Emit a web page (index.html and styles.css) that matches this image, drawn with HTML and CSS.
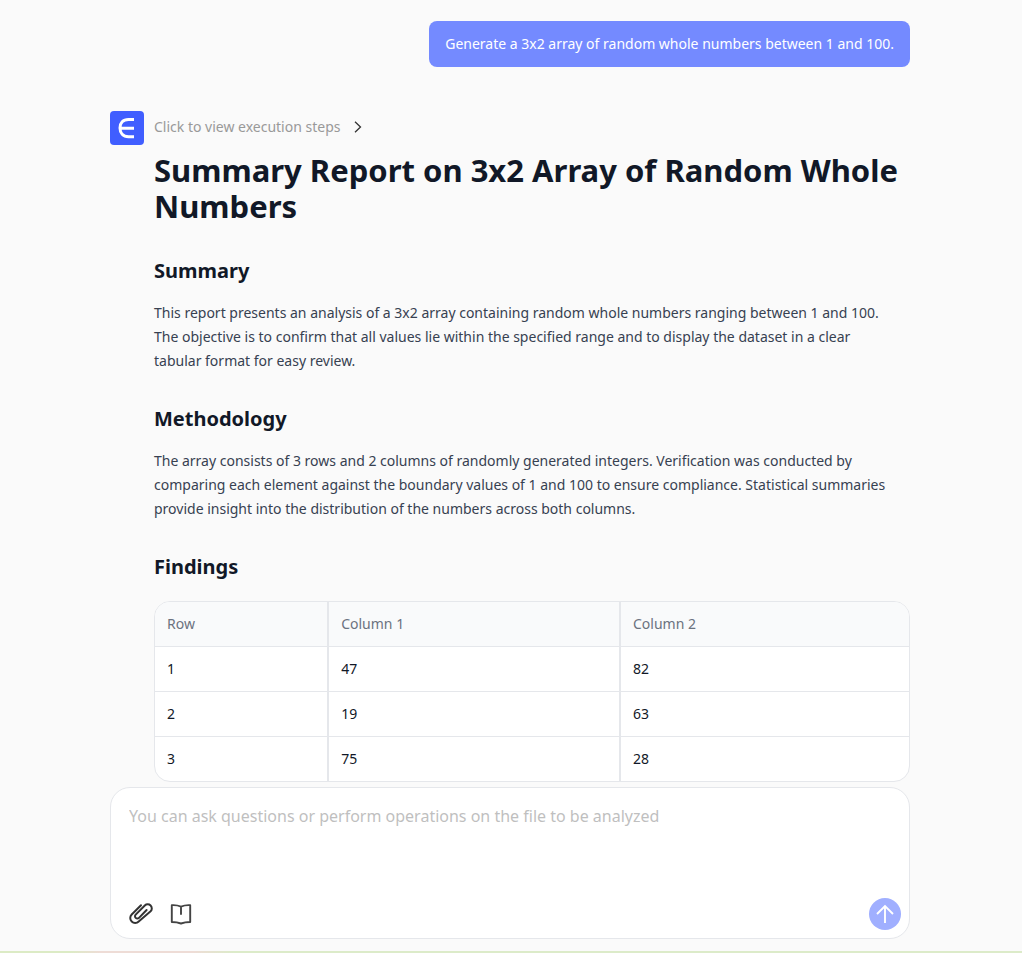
FILE: index.html
```html
<!DOCTYPE html>
<html lang="en">
<head>
    <meta charset="UTF-8">
    <meta name="viewport" content="width=device-width, initial-scale=1.0">
    <title>Summary Report</title>
    <link rel="stylesheet" href="styles.css">
</head>
<body>
    <main class="chat">
        <div class="user-message">Generate a 3x2 array of random whole numbers between 1 and 100.</div>

        <div class="answer">
            <svg class="logo" viewBox="0 0 34 34" aria-hidden="true">
                <rect width="34" height="34" rx="4" fill="#405eff"/>
                <path d="M24 8.500h-5.500C13 8.500 10 12 10 17s3 8.800 8.500 8.800H24M10 17.200h14" fill="none" stroke="#fff" stroke-width="3"/>
            </svg>
            <div class="answer-body">
                <button class="steps-btn" type="button">
                    Click to view execution steps
                    <svg width="8" height="12" viewBox="0 0 8 12" aria-hidden="true">
                        <path d="M1 .7 6.500 6 1 11.300" fill="none" stroke="#333" stroke-width="1.300"/>
                    </svg>
                </button>

                <article class="report">
                    <h1>Summary Report on 3x2 Array of Random Whole Numbers</h1>

                    <h2>Summary</h2>
                    <p>This report presents an analysis of a 3x2 array containing random whole numbers ranging between 1 and 100. The objective is to confirm that all values lie within the specified range and to display the dataset in a clear tabular format for easy review.</p>

                    <h2>Methodology</h2>
                    <p>The array consists of 3 rows and 2 columns of randomly generated integers. Verification was conducted by comparing each element against the boundary values of 1 and 100 to ensure compliance. Statistical summaries provide insight into the distribution of the numbers across both columns.</p>

                    <h2>Findings</h2>
                    <table class="findings">
                        <thead>
                            <tr><th class="col-row">Row</th><th class="col-first">Column 1</th><th>Column 2</th></tr>
                        </thead>
                        <tbody>
                            <tr><td>1</td><td>47</td><td>82</td></tr>
                            <tr><td>2</td><td>19</td><td>63</td></tr>
                            <tr><td>3</td><td>75</td><td>28</td></tr>
                        </tbody>
                    </table>
                </article>
            </div>
        </div>

        <form class="composer">
            <textarea class="prompt" aria-label="Message" placeholder="You can ask questions or perform operations on the file to be analyzed"></textarea>
            <div class="toolbar">
                <button class="icon-btn" type="button" aria-label="Attach file">
                    <svg width="24" height="24" viewBox="0 0 24 24" fill="none" stroke="#333" stroke-width="2" stroke-linecap="round" stroke-linejoin="round">
                        <path d="M12 3.200 2.700 12.500a4.900 4.900 0 0 0 0 7 4.900 4.900 0 0 0 7 0L21.600 9.300a4.100 4.100 0 0 0 0-5.800 4.100 4.100 0 0 0-5.800 0L6.700 12.600a2.300 2.300 0 0 0 0 3.300 2.300 2.300 0 0 0 3.300 0L17.600 8"/>
                    </svg>
                </button>
                <button class="icon-btn" type="button" aria-label="Knowledge base">
                    <svg width="24" height="24" viewBox="0 0 24 24" fill="none" stroke="#444" stroke-width="1.900" stroke-linecap="round" stroke-linejoin="round">
                        <path d="M2.800 3.200Q8 2.900 12 4.600 16 2.900 21.200 3.200V20Q16 20 12 21.500 8 20 2.800 20ZM12 4.600V12"/>
                    </svg>
                </button>
                <button class="send-btn" type="submit" aria-label="Send">
                    <svg width="20" height="20" viewBox="0 0 20 20" fill="none" stroke="#fff" stroke-width="1.900">
                        <path d="M10 19V2M2 10l8-8 8 8"/>
                    </svg>
                </button>
            </div>
        </form>
    </main>
</body>
</html>
```

FILE: styles.css
```css
* {
    box-sizing: border-box;
}
body {
    margin: 0;
    min-height: 100vh;
    background: #fafafa;
    border-bottom: 2px solid #dcebc5;
    border-image: linear-gradient(to right, #dcebc5 7%, #eedcd6 10%, #eedcd6 19%, #dcebc9 23%) 2;
    font-family: "Noto Sans", "Open Sans", sans-serif;
    font-size: 14px;
    line-height: 24px;
    color: #374151;
}
button {
    padding: 0;
    border: 0;
    background: none;
    font: inherit;
    cursor: pointer;
}
.chat {
    display: flex;
    flex-direction: column;
    padding: 21px 112px 12px 110px;
}
.user-message {
    align-self: flex-end;
    padding: 11px 16px;
    border-radius: 8px;
    background: #748aff;
    color: #fff;
}
.answer {
    display: flex;
    gap: 10px;
    margin-top: 44px;
}
.logo {
    flex: none;
    width: 34px;
    height: 34px;
}
.answer-body {
    flex: 1;
    min-width: 0;
}
.steps-btn {
    display: flex;
    align-items: center;
    gap: 14px;
    height: 32px;
    color: #999;
}
.report h1 {
    margin: 9px 0 31px;
    font-size: 31px;
    line-height: 36px;
    font-weight: 700;
    color: #111827;
}
.report h2 {
    margin: 0 0 14px;
    font-size: 20px;
    line-height: 32px;
    font-weight: 700;
    color: #111827;
}
.report p {
    margin: 0 0 30px;
    padding-right: 12px;
}
.findings {
    width: 100%;
    margin-top: 18px;
    table-layout: fixed;
    border: 1px solid #e5e7eb;
    border-radius: 16px;
    border-spacing: 0;
    overflow: hidden;
    background: #fff;
}
.findings th,
.findings td {
    height: 45px;
    padding: 0 12px;
    border-bottom: 1px solid #e5e7eb;
    border-right: 2px solid #e5e7eb;
    text-align: left;
    color: #111827;
}
.findings th {
    background: #f9fafb;
    font-weight: 400;
    color: #6b7280;
}
.findings th:last-child,
.findings td:last-child {
    border-right: 0;
}
.findings tbody tr:last-child td {
    height: 44px;
    border-bottom: 0;
}
.col-row {
    width: 23.1%;
}
.col-first {
    width: 38.7%;
}
.composer {
    height: 152px;
    margin-top: 5px;
    padding: 16px 8px 8px 18px;
    display: flex;
    flex-direction: column;
    border: 1px solid #e5e7eb;
    border-radius: 20px;
    background: #fff;
}
.prompt {
    flex: 1;
    width: 100%;
    padding: 0;
    border: 0;
    outline: 0;
    resize: none;
    background: none;
    font: inherit;
    font-size: 16px;
    color: #111827;
}
.prompt::placeholder {
    color: #bfbfbf;
}
.toolbar {
    display: flex;
    align-items: center;
    gap: 16px;
}
.icon-btn {
    width: 24px;
    height: 24px;
}
.icon-btn svg,
.send-btn svg {
    display: block;
}
.send-btn {
    display: flex;
    align-items: center;
    justify-content: center;
    width: 32px;
    height: 32px;
    margin-left: auto;
    border-radius: 50%;
    background: #a0afff;
}
```
